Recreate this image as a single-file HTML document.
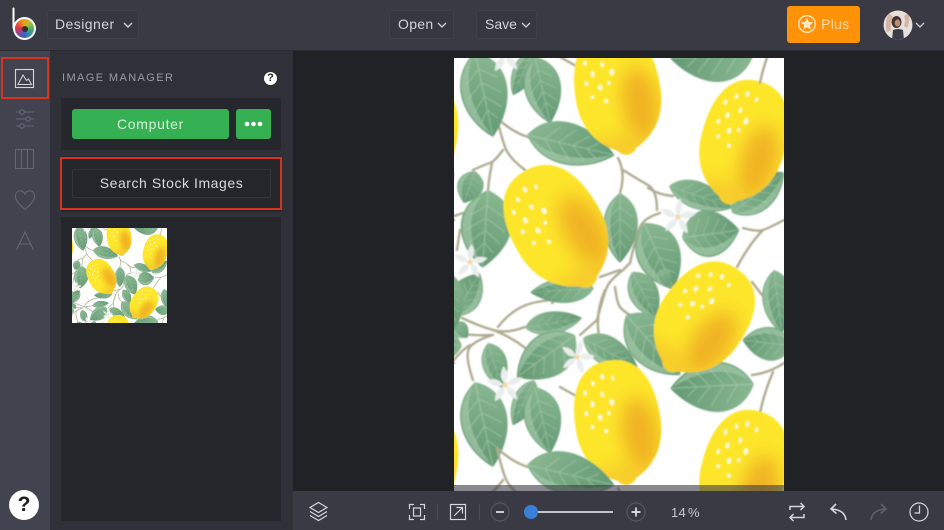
<!DOCTYPE html>
<html><head><meta charset="utf-8"><style>
*{box-sizing:border-box}
html,body{margin:0;padding:0;width:944px;height:530px;overflow:hidden;background:#212226;font-family:"Liberation Sans",sans-serif}
.a{position:absolute}
.t{position:absolute;white-space:nowrap;line-height:1}
.dd{position:absolute;border:1px solid #3f404a;border-radius:2px;background:#363741}
svg{position:absolute;overflow:hidden}
</style></head><body>

<svg width="0" height="0" style="position:absolute">
<defs>
<filter id="b6" x="-60%" y="-60%" width="220%" height="220%"><feGaussianBlur stdDeviation="9"/></filter>
<filter id="soft" x="-5%" y="-5%" width="110%" height="110%"><feGaussianBlur stdDeviation="0.7"/></filter>
<clipPath id="lc"><path d="M0-62C34-62 46-34 46 0 46 32 28 48 10 56 5 63-5 63-10 56-28 48-46 32-46 0-46-34-34-62 0-62Z"/></clipPath>
<linearGradient id="lf" x1="0" y1="0" x2="1" y2="0.25"><stop offset="0" stop-color="#8dba94"/><stop offset=".5" stop-color="#78aa84"/><stop offset="1" stop-color="#659b75"/></linearGradient>
<g id="leaf">
<path d="M0 0C18-30 65-28 100 0 70 26 22 28 0 0Z" fill="url(#lf)"/>
<path d="M6 3C28 16 65 14 96 1 70 24 25 25 6 3Z" fill="#a6caab" opacity=".65"/>
<path d="M0 0L100 0M20 0L34-15M36 0L52-16M52 0L68-13M68 0L80-8M20 0L34 13M36 0L52 15M52 0L68 12M68 0L80 7" stroke="#c4dcc4" stroke-width="1.200" fill="none" opacity=".4"/>
</g>
<g id="lem">
<g clip-path="url(#lc)">
<rect x="-50" y="-70" width="100" height="140" fill="#fde62c"/>
<ellipse cx="22" cy="14" rx="20" ry="36" fill="#eeaa24" opacity=".85" filter="url(#b6)"/>
<ellipse cx="-6" cy="54" rx="38" ry="12" fill="#f2b92f" opacity=".65" filter="url(#b6)"/>
</g>
<g fill="#fff" opacity=".82">
<ellipse cx="-30" cy="-34" rx="1.800" ry="2.300"/><ellipse cx="-20" cy="-42" rx="1.800" ry="2.200"/><ellipse cx="-9" cy="-47" rx="2" ry="2.600"/><ellipse cx="2" cy="-44" rx="1.500" ry="2.200"/>
<ellipse cx="-24" cy="-22" rx="2.200" ry="2.800"/><ellipse cx="-12" cy="-30" rx="1.800" ry="2.600"/><ellipse cx="-3" cy="-21" rx="2.500" ry="3.200"/><ellipse cx="-32" cy="-14" rx="1.800" ry="2.200"/>
<ellipse cx="-18" cy="-8" rx="2.300" ry="2.800"/><ellipse cx="-8" cy="-11" rx="1.800" ry="1.800"/><ellipse cx="-28" cy="0" rx="1.800" ry="1.800"/><ellipse cx="-14" cy="6" rx="2" ry="2"/>
</g>
</g>
<g id="fl">
<g fill="#e9eeec">
<path d="M0-2C-5-8-3-14 2-21 6-14 6-8 0-2Z"/>
<path d="M0-2C-5-8-3-14 2-21 6-14 6-8 0-2Z" transform="rotate(72)"/>
<path d="M0-2C-5-8-3-14 2-21 6-14 6-8 0-2Z" transform="rotate(144)"/>
<path d="M0-2C-5-8-3-14 2-21 6-14 6-8 0-2Z" transform="rotate(216)"/>
<path d="M0-2C-5-8-3-14 2-21 6-14 6-8 0-2Z" transform="rotate(288)"/>
</g>
<circle r="3" fill="#f3d8a6"/>
</g>
<g id="tile">
<g fill="none" stroke="#aeaa8f" stroke-width="2.400" stroke-linecap="round" stroke-linejoin="round">
<path d="M43 60Q47 78 51 89T71 112M43 60Q58 74 74 79M49 92Q40 104 36 105T19 112M38 105Q35 120 34 132"/>
<path d="M164 100Q172 115 166 135M169 112Q185 122 194 127T203 152M194 130Q205 137 219 138"/>
<path d="M206 155Q190 160 186 169T176 205L169 212Q156 222 153 229T143 262L126 277M151 232Q143 250 144 269T151 307M161 229Q163 245 166 249T176 257"/>
<path d="M330 162Q315 170 309 172T289 170M309 172Q296 185 283 209M298 317Q315 315 330 305M319 314Q310 335 306 355"/>
<path d="M44 269Q60 248 83 244T98 245M8 260Q25 268 39 272T71 269M39 272Q60 280 76 294M0 275Q20 278 39 277Q22 282 16 289T19 322M0 302Q8 292 16 287"/>
<path d="M106 329L124 339M146 219L166 212M298 224L308 237M0 158L9 155M6 172L3 192"/>
</g>
<use href="#leaf" transform="translate(21 324) rotate(78) scale(.87 1.12)"/>
<use href="#leaf" transform="translate(80 322) rotate(115) scale(.5 .55)"/>
<use href="#leaf" transform="translate(81 329) rotate(77) scale(.68 .88)"/>
<use href="#leaf" transform="translate(73 77) rotate(13) scale(.9 1)"/>
<use href="#leaf" transform="translate(21 113) rotate(109) scale(.34 .62)"/>
<use href="#leaf" transform="translate(34 132) rotate(94) scale(.78 1.22)"/>
<use href="#leaf" transform="translate(166 135) rotate(90) scale(.7 .82)"/>
<use href="#leaf" transform="translate(190 165) rotate(66) scale(.73 1.05)"/>
<use href="#leaf" transform="translate(215 128) rotate(19) scale(.67 .65)"/>
<use href="#leaf" transform="translate(228 180) rotate(-8) scale(.58 1.12)"/>
<use href="#leaf" transform="translate(278 155) rotate(-38) scale(.66 .88)"/>
<use href="#leaf" transform="translate(320 212) rotate(83) scale(.64 .75)"/>
<use href="#leaf" transform="translate(140 230) rotate(176) scale(.64 .6)"/>
<use href="#leaf" transform="translate(71 270) rotate(-10) scale(.58 .55)"/>
<use href="#leaf" transform="translate(178 214) rotate(62) scale(.52 .7)"/>
<use href="#leaf" transform="translate(206 212) rotate(66) scale(.18 .38)"/>
<use href="#leaf" transform="translate(172 257) rotate(48) scale(.81 1.12)"/>
<use href="#leaf" transform="translate(338 288) rotate(187) scale(.5 .8)"/>
<use href="#leaf" transform="translate(300 326) rotate(177) scale(.84 1.2)"/>
<use href="#leaf" transform="translate(0 258) rotate(-59) scale(.5 .75)"/>
<use href="#leaf" transform="translate(0 265) rotate(47) scale(.2 .38)"/>
<use href="#leaf" transform="translate(34 285) rotate(73) scale(.47 .6)"/>
<use href="#leaf" transform="translate(121 277) rotate(144) scale(.72 1.05)"/>
<use href="#leaf" transform="translate(129 280) rotate(29) scale(.63 .7)"/>
<use href="#fl" transform="translate(224 159) scale(.9)"/>
<use href="#fl" transform="translate(16 204) scale(.85)"/>
<use href="#fl" transform="translate(123 299) rotate(10) scale(.85)"/>
<use href="#fl" transform="translate(51 327) rotate(-10) scale(.9)"/>
<use href="#lem" transform="translate(164 365) rotate(-9) scale(.93 1.02)"/>
<use href="#lem" transform="translate(289 85) rotate(15) scale(.92 1.03)"/>
<use href="#lem" transform="translate(104 171) rotate(-30) scale(1 1.08)"/>
<use href="#lem" transform="translate(248 262) rotate(35) scale(.95 1)"/>
</g>
<g id="sheet">
<rect width="330" height="330" fill="#fff"/>
<use href="#tile" y="0"/><use href="#tile" y="-330"/><use href="#tile" x="-330"/><use href="#tile" x="-330" y="-330"/>
</g>
</defs>
</svg>

<!-- top bar -->
<div class="a" style="left:0;top:0;width:944px;height:51px;background:#393a43;border-bottom:1px solid #2b2c33"></div>
<!-- sidebar -->
<div class="a" style="left:0;top:51px;width:50px;height:479px;background:#41434f"></div>
<!-- panel -->
<div class="a" style="left:50px;top:51px;width:243px;height:479px;background:#2f3038"></div>
<div class="a" style="left:61px;top:98px;width:220px;height:52px;background:#26272d"></div>
<div class="a" style="left:61px;top:156px;width:220px;height:56px;background:#26272d"></div>
<div class="a" style="left:61px;top:217px;width:220px;height:304px;background:#25262c"></div>
<!-- canvas bg -->
<div class="a" style="left:293px;top:51px;width:651px;height:440px;background:#212226"></div>
<!-- bottom bar -->
<div class="a" style="left:293px;top:491px;width:651px;height:39px;background:#393a43"></div>

<!-- canvas -->
<svg style="left:454px;top:58px" width="330" height="433" viewBox="0 0 330 433">
<rect width="330" height="433" fill="#fff"/>
<g filter="url(#soft)">
<use href="#tile"/><use href="#tile" y="-330"/><use href="#tile" y="330"/>
<use href="#tile" x="-330"/><use href="#tile" x="-330" y="-330"/><use href="#tile" x="-330" y="330"/>
</g>
<rect y="427" width="330" height="6" fill="#3a3b44" opacity=".6"/>
</svg>

<!-- logo -->
<svg style="left:8px;top:4px" width="32" height="38" viewBox="0 0 32 38">
<path d="M5.500 4.500V24" stroke="#fff" stroke-width="2" fill="none" stroke-linecap="round"/>
<circle cx="16.500" cy="24.500" r="11.500" fill="#fff"/>
</svg>
<div class="a" style="left:15px;top:19px;width:19px;height:19px;border-radius:50%;background:conic-gradient(#e8a21f,#a4c43a,#4fb05a,#2f93a8,#3b62b4,#7b4ea3,#d9304f,#ef6a24,#e8a21f)"></div>
<div class="a" style="left:21.500px;top:25.500px;width:6px;height:6px;border-radius:50%;background:#3a2c2c"></div>

<!-- Designer -->
<div class="dd" style="left:47px;top:10px;width:92px;height:29px"></div>
<div class="t" style="left:55px;top:17px;font-size:14px;letter-spacing:.45px;color:#d2d3d8">Designer</div>
<svg style="left:123px;top:21px" width="10" height="8"><path d="M1 2L5 6 9 2" stroke="#d2d3d8" stroke-width="1.400" fill="none"/></svg>

<div class="dd" style="left:389px;top:10px;width:65px;height:29px"></div>
<div class="t" style="left:398px;top:17px;font-size:14px;letter-spacing:.3px;color:#d2d3d8">Open</div>
<svg style="left:437px;top:21px" width="10" height="8"><path d="M1 2L5 6 9 2" stroke="#d2d3d8" stroke-width="1.300" fill="none"/></svg>
<div class="dd" style="left:476px;top:10px;width:61px;height:29px"></div>
<div class="t" style="left:485px;top:17px;font-size:14px;letter-spacing:0;color:#d2d3d8">Save</div>
<svg style="left:521px;top:21px" width="10" height="8"><path d="M1 2L5 6 9 2" stroke="#d2d3d8" stroke-width="1.300" fill="none"/></svg>

<!-- plus -->
<div class="a" style="left:787px;top:6px;width:73px;height:37px;background:#ff9207;border-radius:3px"></div>
<svg style="left:797px;top:14px" width="20" height="20" viewBox="0 0 20 20">
<circle cx="10" cy="10" r="8.300" fill="none" stroke="#ffe3b8" stroke-width="1.500"/>
<path d="M10 3.800L11.800 7.900 16.200 8.300 12.900 11.200 13.900 15.600 10 13.300 6.100 15.600 7.100 11.200 3.800 8.300 8.200 7.900Z" fill="#ffe9c8"/>
</svg>
<div class="t" style="left:821px;top:17px;font-size:14px;letter-spacing:.3px;color:#ffdcab">Plus</div>

<!-- avatar -->
<svg style="left:883px;top:10px" width="30" height="30" viewBox="0 0 30 30">
<clipPath id="av"><circle cx="15" cy="15" r="14.500"/></clipPath>
<g clip-path="url(#av)">
<rect width="30" height="30" fill="#e6e0dd"/>
<path d="M6 3Q1 12 4 22L8 20Q7 12 10 7ZM25 3Q28 10 24 18L21 16Q23 10 21 6Z" fill="#d3b5a3"/>
<ellipse cx="13.500" cy="12" rx="5" ry="6" fill="#44322f"/>
<ellipse cx="14.500" cy="13" rx="2.800" ry="3.600" fill="#b98c77"/>
<path d="M9 30L10 20Q15 18 20 20L21 30Z" fill="#3a3c48"/>
</g>
</svg>
<svg style="left:915px;top:21px" width="10" height="8"><path d="M1 2L5 6 9 2" stroke="#d2d3d8" stroke-width="1.300" fill="none"/></svg>

<!-- sidebar icons -->
<svg style="left:0;top:51px" width="50" height="479" viewBox="0 51 50 479" fill="none">
<rect x="15.500" y="69.500" width="18" height="18" stroke="#d5d6da" stroke-width="1.100"/>
<path d="M18 84.500H31.500L28.500 79 26.500 80.500 23 75Z" stroke="#d5d6da" stroke-width="1"/>
<g stroke="#646673" stroke-width="1.100">
<path d="M16 112H34M16 119H34M16 126H34"/>
<circle cx="22" cy="112" r="2.200" fill="#41434f"/><circle cx="28" cy="119" r="2.200" fill="#41434f"/><circle cx="22" cy="126" r="2.200" fill="#41434f"/>
<rect x="15.500" y="149.500" width="18" height="19"/><path d="M21.500 149.500V168.500M27.500 149.500V168.500"/>
<path d="M25 209.500C20 205 15.500 201 15.500 196 15.500 190 22.500 189 25 194 27.500 189 34.500 190 34.500 196 34.500 201 30 205 25 209.500Z"/>
<path d="M16.500 250L25 232 33.500 250M19.500 244H30.500"/>
</g>
</svg>
<div class="a" style="left:9px;top:490px;width:30px;height:30px;border-radius:50%;background:#fff;color:#1e1e22;font-weight:700;font-size:21px;line-height:30px;text-align:center">?</div>

<!-- red boxes -->
<div class="a" style="left:1px;top:57px;width:48px;height:42px;border:2px solid #d8331d"></div>

<!-- panel header -->
<div class="t" style="left:62px;top:73px;font-size:11px;letter-spacing:1.400px;color:#9a9ba3">IMAGE MANAGER</div>
<div class="a" style="left:264px;top:71.500px;width:13px;height:13px;border-radius:50%;background:#fff;color:#26272d;font-weight:700;font-size:11px;line-height:13px;text-align:center">?</div>

<!-- buttons -->
<div class="a" style="left:72px;top:109px;width:157px;height:30px;background:#35b052;border-radius:3px;color:#d6f0dc;font-size:14px;letter-spacing:.7px;line-height:30px;text-align:center">Computer</div>
<div class="a" style="left:236px;top:109px;width:35px;height:30px;background:#35b052;border-radius:3px"></div>
<svg style="left:236px;top:109px" width="35" height="30"><g fill="#fff"><circle cx="11" cy="15" r="2.300"/><circle cx="17.500" cy="15" r="2.300"/><circle cx="24" cy="15" r="2.300"/></g></svg>

<div class="a" style="left:60px;top:157px;width:222px;height:53px;border:2px solid #d8331d"></div>
<div class="a" style="left:72px;top:169px;width:199px;height:29px;background:#25262c;border:1px solid #33343c;border-radius:2px;color:#d8d9dd;font-size:14px;letter-spacing:.55px;line-height:27px;text-align:center">Search Stock Images</div>

<!-- thumb -->
<svg style="left:72px;top:228px" width="95" height="95" viewBox="0 0 330 330"><use href="#sheet"/></svg>

<!-- toolbar icons -->
<svg style="left:293px;top:491px" width="651" height="39" viewBox="293 491 651 39" fill="none" stroke="#d5d6da" stroke-width="1.200">
<path d="M318.500 502.500L327 507.500 318.500 512.500 310 507.500Z"/>
<path d="M310 511.500L318.500 516.500 327 511.500M310 515.500L318.500 520.500 327 515.500"/>
<path d="M409.500 509V504.500H414M420 504.500H424.500V509M424.500 515V519.500H420M414 519.500H409.500V515"/>
<rect x="413.500" y="508" width="7" height="8"/>
<path d="M437.500 504V520M479.500 504V520" stroke="#4b4c57"/>
<rect x="450.500" y="504.500" width="15" height="15"/>
<path d="M454 516L462 508M456.500 507.500H462.500V513.500"/>
<circle cx="500" cy="512" r="9" stroke="#555663"/>
<path d="M496 512H504" stroke-width="1.700" stroke="#e6e6ea"/>
<path d="M531 512H613" stroke="#f2f2f4" stroke-width="1.600"/>
<circle cx="531" cy="512" r="7" fill="#3a7fd6" stroke="none"/>
<circle cx="636" cy="512" r="9" stroke="#555663"/>
<path d="M631.500 512H640.500M636 507.500V516.500" stroke-width="1.700" stroke="#e6e6ea"/>
<path d="M790 510V506.500H803.500M800.500 503L804 506.500 800.500 510M804 514V517.500H790.500M793.500 514L790 517.500 793.500 521" stroke-width="1.500"/>
<path d="M846 520C845 513 841 510 832 509M836 504L831 509 836.500 513.500" stroke-width="1.600"/>
<path d="M871 520C872 513 876 510 885 509M881 504L886 509 880.500 513.500" stroke="#5e5f6a" stroke-width="1.600"/>
<circle cx="919" cy="512" r="9"/>
<path d="M919.500 505.500V513H914.500" stroke-width="1.300"/>
</svg>
<div class="t" style="left:671px;top:506px;font-size:13px;letter-spacing:.3px;word-spacing:-2px;color:#c8c9ce">14 %</div>

</body></html>
